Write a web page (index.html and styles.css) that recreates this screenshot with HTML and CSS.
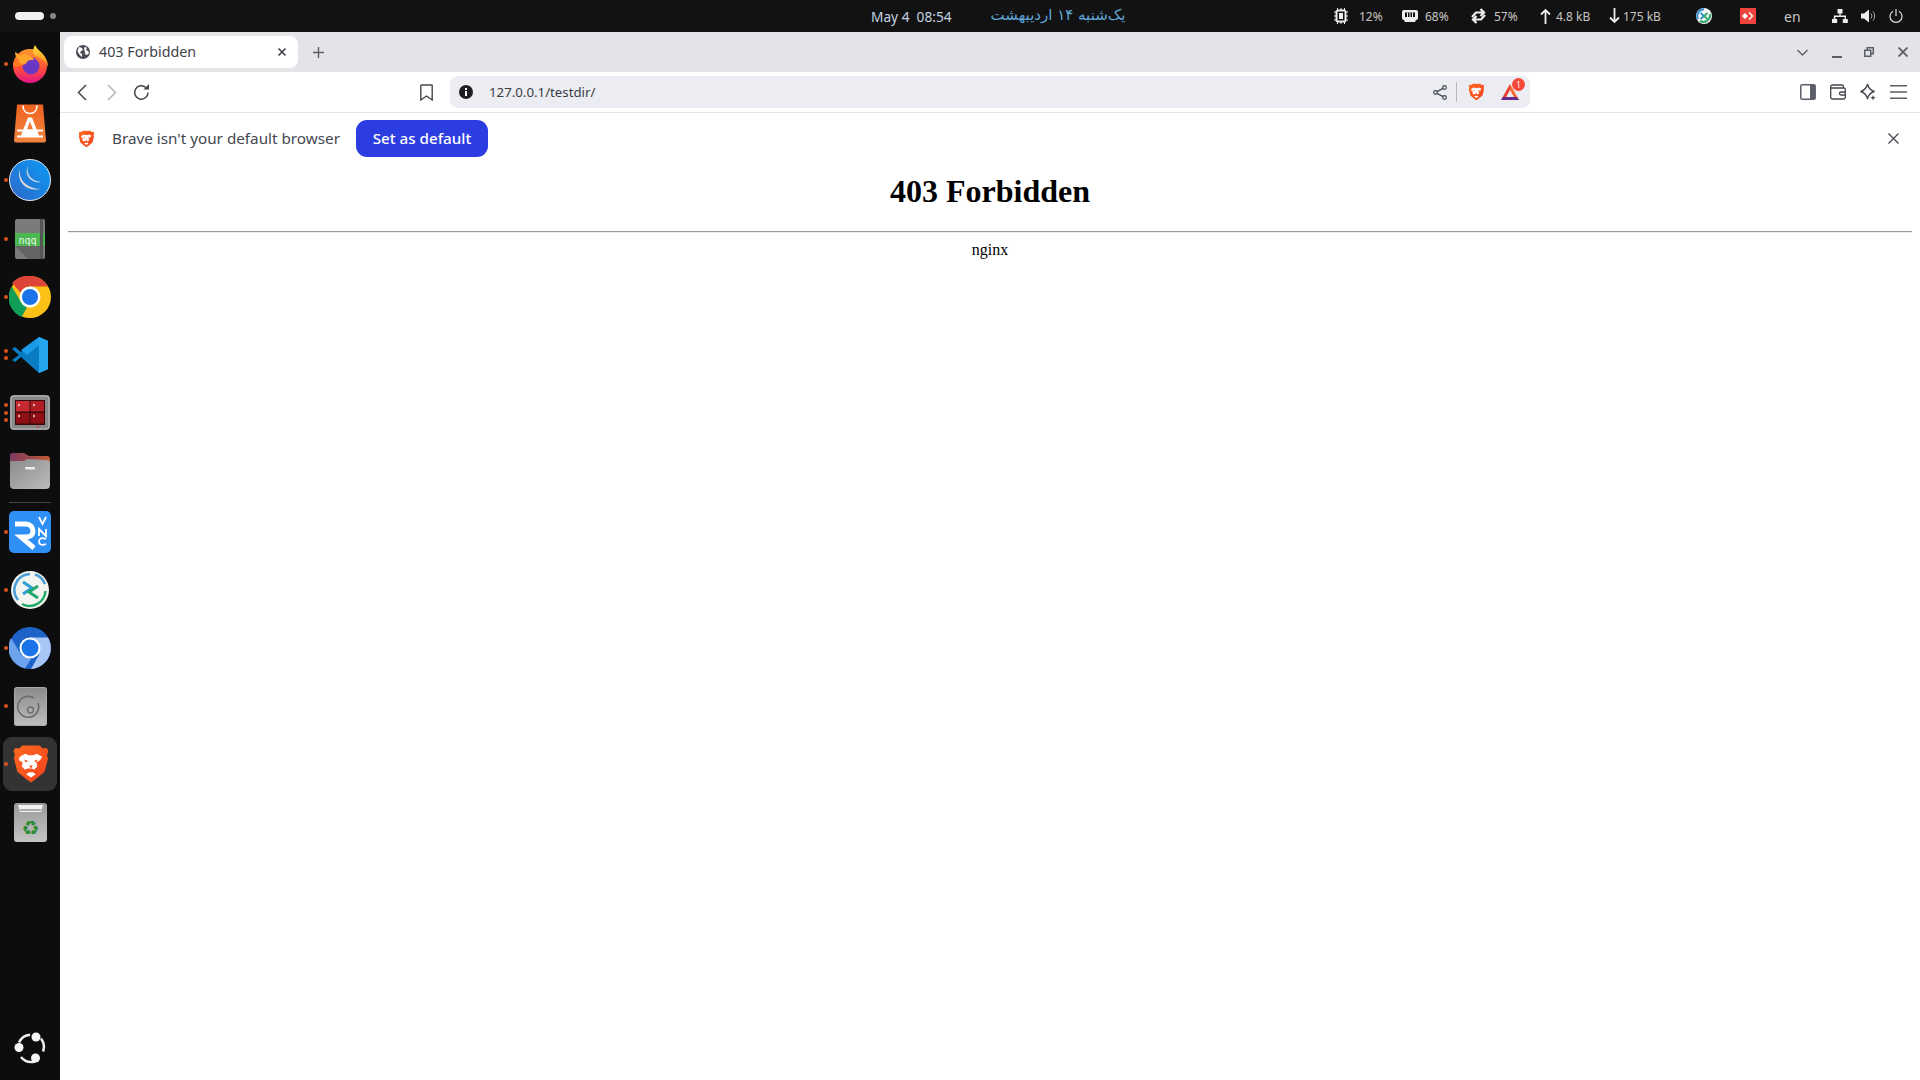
FILE: index.html
```html
<!DOCTYPE html>
<html lang="en">
<head>
<meta charset="utf-8">
<title>403 Forbidden</title>
<link rel="stylesheet" href="styles.css">
</head>
<body>
<svg class="defs" width="0" height="0" aria-hidden="true">
  <defs>
    <linearGradient id="gBrave" x1="0" y1="0" x2="1" y2="1"><stop offset="0" stop-color="#ff6a1f"/><stop offset="1" stop-color="#f0401f"/></linearGradient>
    <symbol id="brave" viewBox="0 0 36 40">
      <path fill="url(#gBrave)" d="M9 1h18l3 3 4-.5 2 3-1.500 4.500 1 3.500L32 28l-9 7.500-5 3.500-5-3.500L4 28 .5 14l1-3.500L0 6.500l2-3 4 .5z"/>
      <path fill="#fff" d="M18 34l-5-3.500 3-2h4l3 2zM6.500 12.500l5.500-3 3.500 1.500h5l3.500-1.500 5.500 3-2 3.500-4 2.500 1 4-3.500 3.500-2-1.500h-5l-2 1.500-3.500-3.500 1-4-4-2.500z"/>
      <path fill="#f0501f" d="M11 15.500l4 1.500-2.500 1.500zM25 15.500l-4 1.500 2.500 1.500zM16 21.500h4l-2 3z"/>
    </symbol>
  </defs>
</svg>

<header class="topbar">
  <div class="workspaces"><span class="ws-pill"></span><span class="ws-dot"></span></div>
  <div class="clock"><span>May 4&nbsp; 08:54</span><span class="persian" dir="rtl" lang="fa">یک‌شنبه ۱۴ اردیبهشت</span></div>
  <div class="status">
    <span class="stat s-cpu"><svg width="14" height="16" viewBox="0 0 14 16"><path fill="none" stroke="#eee" d="M3.500 0v16M7 0v16M10.500 0v16M0 4h14M0 8h14M0 12h14"/><rect x="1.500" y="1.500" width="11" height="13" rx="2.500" fill="#eee"/><rect x="3.500" y="3.500" width="7" height="9" fill="#121212"/><rect x="5" y="5" width="4" height="6" fill="#eee"/></svg>12%</span>
    <span class="stat s-mem"><svg width="16" height="14" viewBox="0 0 16 14"><path fill="#eee" d="M2 1h12a2 2 0 0 1 2 2v6a2 2 0 0 1-2 2l-1 2H3l-1-2a2 2 0 0 1-2-2V3a2 2 0 0 1 2-2z"/><path fill="#121212" d="M3 3.500h10V8H3z"/><path fill="#eee" d="M5 3.500h1V8H5zM7.500 3.500h1V8h-1zM10 3.500h1V8h-1z"/></svg>68%</span>
    <span class="stat s-swap"><svg width="15" height="16" viewBox="0 0 15 16"><path fill="none" stroke="#eee" stroke-width="2.200" d="M1 9l4-4.500h8M9.500 1l3.500 3.500L9.500 8M14 7l-4 4.500H2M5.500 15L2 11.500 5.500 8"/></svg>57%</span>
    <span class="stat s-up"><svg width="11" height="16" viewBox="0 0 11 16"><path fill="none" stroke="#eee" stroke-width="1.800" d="M5.500 16V2M1 6.500l4.500-4.500L10 6.500"/></svg>4.8 kB</span>
    <span class="stat s-down"><svg width="11" height="16" viewBox="0 0 11 16"><path fill="none" stroke="#eee" stroke-width="1.800" d="M5.500 0v14M1 9.500L5.500 14 10 9.500"/></svg>175 kB</span>
    <span class="tray t-rust"><svg width="16" height="16" viewBox="0 0 16 16"><circle cx="8" cy="8" r="8" fill="#f2f4f2"/><path fill="none" stroke="#2f8fd6" stroke-width="2" d="M8 1.200A6.800 6.800 0 0 0 2 11"/><path fill="none" stroke="#2fa96f" stroke-width="2" d="M14 6a6.800 6.800 0 0 1-10 7"/><path fill="none" stroke="#2f8fd6" stroke-width="1.800" d="M4.500 5L8 8 4.500 11"/><path fill="none" stroke="#2fa96f" stroke-width="1.800" d="M11.500 5L8 8l3.500 3"/></svg></span>
    <span class="tray t-any"><svg width="16" height="16" viewBox="0 0 16 16"><rect width="16" height="16" fill="#ef443b"/><path fill="#fff" d="M5 5l3 3-3 3-3-3zM9.500 4l4 4-4 4-1-1 3-3-3-3z"/></svg></span>
    <span class="lang">en</span>
    <span class="tray t-net"><svg width="16" height="16" viewBox="0 0 16 16"><path fill="#eee" d="M5.500 1h5v4.500H8.600V7.500H14V11h1.800v4h-5v-4h1.800V9H3.400v2h1.800v4H0v-4h1.800V7.500h5.600V5.500H5.500z"/></svg></span>
    <span class="tray t-vol"><svg width="15" height="16" viewBox="0 0 15 16"><path fill="#eee" d="M0 5.500h3L8 1.500v13L3 10.500H0z"/><path fill="none" stroke="#aaa" d="M10 5.500a4 4 0 0 1 0 5M12 3.500a7 7 0 0 1 0 9"/></svg></span>
    <span class="tray t-pow"><svg width="14" height="16" viewBox="0 0 14 16"><path fill="none" stroke="#ddd" stroke-width="1.200" d="M7 1v7M4 3.200a6 6 0 1 0 6 0"/></svg></span>
  </div>
</header>

<div class="desk">
  <nav class="dock">
    <div class="dock-item"><i class="dot d1"></i>
      <svg width="36" height="38" viewBox="0 0 36 38"><defs><linearGradient id="ff" x1="0" y1="0" x2="0" y2="1"><stop offset="0" stop-color="#ff9a2a"/><stop offset=".6" stop-color="#ff4a3c"/><stop offset="1" stop-color="#e0158a"/></linearGradient><linearGradient id="ff2" x1="0" y1="0" x2="0" y2="1"><stop offset="0" stop-color="#ffdb3a"/><stop offset="1" stop-color="#ff8a20"/></linearGradient></defs><circle cx="18" cy="21" r="17" fill="url(#ff)"/><path fill="url(#ff2)" d="M23 0c1 3 4 5 7 8 4 4 6 9 6 14-2-5-5-8-10-10-3-1-5-3-5-6 0-2 1-4 2-6z"/><circle cx="19" cy="21" r="8.500" fill="#6a36c4"/><path fill="#ffa52c" d="M3 7c3 1 4 3 5 4 3-2 6-2 8-1 3 1 5 3 6 5-4 0-6 0-7 2-1 3-6 3-10 2 2-2 2-3 1-5-2-2-3-4-3-7z"/><path fill="#ff7a20" d="M1 21c0-3 1-5 2-7 3 3 6 5 10 5-3 2-8 3-12 2z"/></svg>
    </div>
    <div class="dock-item">
      <svg width="42" height="42" viewBox="0 -1.500 42 42"><defs><linearGradient id="as" x1="0" y1="0" x2="0" y2="1"><stop offset="0" stop-color="#f0621f"/><stop offset="1" stop-color="#f08540"/></linearGradient></defs><path fill="url(#as)" d="M8 2h26l3 36a2 2 0 0 1-2 2H7a2 2 0 0 1-2-2z"/><path fill="none" stroke="#fff" stroke-width="1.600" d="M14 3c0 5 3 8 7 8s7-3 7-8"/><path fill="#fff" d="M19 15h4l7 18h4v2H8v-2h4zM21 19l-3 8h6z"/><path fill="#fff" d="M8 27h26v2H8z"/></svg>
    </div>
    <div class="dock-item"><i class="dot d1"></i>
      <svg width="42" height="42" viewBox="0 0 42 42"><defs><linearGradient id="mt" x1="1" y1="0" x2="0" y2="1"><stop offset="0" stop-color="#0a9bf5"/><stop offset="1" stop-color="#2f67c8"/></linearGradient></defs><circle cx="21" cy="21" r="20.500" fill="url(#mt)" stroke="#dfe8f2" stroke-width="1"/><path fill="#d5d8dc" d="M11 9c-2 10 5 20 20 21-10 3-25-5-20-21zM19 7c-2 8 3 15 13 16-8 2-18-6-13-16z"/></svg>
    </div>
    <div class="dock-item"><i class="dot d1"></i>
      <svg width="30" height="40" viewBox="0 0 30 40"><rect width="30" height="40" rx="2" fill="#7b7b7b"/><path fill="#555" d="M0 27l13 13h13V27z" opacity=".6"/><rect y="14" width="30" height="13" fill="#4cb752"/><rect x="25" width="3" height="40" fill="#555"/><text x="12.500" y="24.500" class="nqq">nqq</text></svg>
    </div>
    <div class="dock-item"><i class="dot d1"></i>
      <svg width="42" height="42" viewBox="0 0 42 42"><circle cx="21" cy="21" r="21" fill="#fbc116"/><path fill="#db4437" d="M21 0a21 21 0 0 1 18.200 10.500H21a10.500 10.500 0 0 0-9.500 6L3 7A21 21 0 0 1 21 0z"/><path fill="#0f9d58" d="M2.800 10.500L12 26a10.500 10.500 0 0 0 6 5.500L12.500 41A21 21 0 0 1 2.800 10.500z" /><circle cx="21" cy="21" r="10.500" fill="#fff"/><circle cx="21" cy="21" r="8" fill="#1a73e8"/></svg>
    </div>
    <div class="dock-item"><i class="dot d2a"></i><i class="dot d2b"></i>
      <svg width="38" height="38" viewBox="0 0 38 38"><path fill="#0a7cc4" d="M28 1l9 4v28l-9 4L10 21l-6 5-3-2 7-5-7-6 3-2 6 5z"/><path fill="#1b9ce8" d="M28 1l9 4v28l-9 4V9L16 19l-6-5z"/><path fill="#25a7f0" d="M28 1l9 4v28l-9 4z"/></svg>
    </div>
    <div class="dock-item"><i class="dot d3a"></i><i class="dot d3b"></i><i class="dot d3c"></i>
      <svg width="40" height="36" viewBox="0 0 40 36"><rect width="40" height="35" rx="4" fill="#888"/><rect x="1" y="1" width="38" height="33" rx="3" fill="none" stroke="#bbb"/><rect x="5" y="5" width="30" height="25" fill="#3a0a0a"/><rect x="6" y="6" width="13.500" height="10.500" fill="#c62a30"/><rect x="20.500" y="6" width="13.500" height="10.500" fill="#b01c22"/><rect x="6" y="18" width="13.500" height="10.500" fill="#8e1015"/><rect x="20.500" y="18" width="13.500" height="10.500" fill="#8e1015"/><path stroke="#fff" stroke-width=".8" fill="none" d="M8 9l2 1-2 1M23 9l2 1-2 1M8 20l2 1-2 1M23 20l2 1-2 1"/><rect x="27" y="31" width="1.500" height="1.500" fill="#e22"/></svg>
    </div>
    <div class="dock-item">
      <svg width="40" height="36" viewBox="0 0 40 36"><defs><linearGradient id="fb" x1="0" y1="0" x2="1" y2="1"><stop offset="0" stop-color="#8a8a8a"/><stop offset="1" stop-color="#bdbdbd"/></linearGradient><linearGradient id="ft" x1="0" y1="0" x2="1" y2="0"><stop offset="0" stop-color="#7d3a62"/><stop offset="1" stop-color="#c05a30"/></linearGradient></defs><path fill="url(#ft)" d="M3 0h11l5 3h18a3 3 0 0 1 3 3v8H0V3a3 3 0 0 1 3-3z"/><path fill="url(#fb)" d="M0 8h14l3-2 20 1a3 3 0 0 1 3 3v22a4 4 0 0 1-4 4H4a4 4 0 0 1-4-4z"/><rect x="15" y="14" width="10" height="2.500" rx="1" fill="#eee"/></svg>
    </div>
    <div class="dock-sep"></div>
    <div class="dock-item"><i class="dot d1"></i>
      <svg width="42" height="42" viewBox="0 0 42 42"><rect width="42" height="42" rx="5" fill="#2e90f5"/><path fill="none" stroke="#fff" stroke-width="5" d="M6 13h11a7 7 0 0 1 7 7c0 4-3 6-7 6h-5l13 11"/><path fill="none" stroke="#fff" stroke-width="1.800" d="M30 6l3.500 7L37 6M30 25v-7l7 7v-7M37 28c-5-2-7 0-7 2.500S32 35 37 33"/></svg>
    </div>
    <div class="dock-item"><i class="dot d1"></i>
      <svg width="38" height="38" viewBox="0 0 38 38"><circle cx="19" cy="19" r="19" fill="#f3f4f0"/><path fill="none" stroke="#4a9fd8" stroke-width="2.500" d="M19 3A16 16 0 0 0 7 29M24 3.500A16 16 0 0 1 34 13"/><path fill="none" stroke="#23a86b" stroke-width="2.500" d="M34.500 20A16 16 0 0 1 11 33"/><path fill="none" stroke="#2f9fd8" stroke-width="3" d="M12 11l9 6-9 6"/><path fill="none" stroke="#23a86b" stroke-width="3" d="M27 15l-9 6 9 6"/></svg>
    </div>
    <div class="dock-item"><i class="dot d1"></i>
      <svg width="42" height="42" viewBox="0 0 42 42"><circle cx="21" cy="21" r="21" fill="#1e62c8"/><path fill="#6ea3ee" d="M2 11l11 18 9 3-6 9.500A21 21 0 0 1 2 11z"/><path fill="#a8c7f4" d="M21 10.500h18A21 21 0 0 1 22 42l8-14z"/><circle cx="21" cy="21" r="10.500" fill="#fff"/><circle cx="21" cy="21" r="8.500" fill="#1a73e8"/></svg>
    </div>
    <div class="dock-item"><i class="dot d1"></i>
      <svg width="33" height="39" viewBox="0 0 33 39"><defs><linearGradient id="dk" x1="0" y1="0" x2="0" y2="1"><stop offset="0" stop-color="#8a8a8a"/><stop offset="1" stop-color="#bfbfbf"/></linearGradient></defs><rect width="33" height="39" rx="3" fill="url(#dk)"/><rect x=".5" y=".5" width="32" height="38" rx="3" fill="none" stroke="#aaa"/><path fill="none" stroke="#6c6c6c" stroke-width="1.600" d="M24 16a10.500 10.500 0 1 1-4-5"/><circle cx="16.500" cy="23" r="3" fill="none" stroke="#6c6c6c" stroke-width="1.400"/></svg>
    </div>
    <div class="dock-item active"><i class="dot d1"></i>
      <svg width="36" height="40" viewBox="-1 0 37 40"><use href="#brave"/></svg>
    </div>
    <div class="dock-item">
      <svg width="33" height="39" viewBox="0 0 33 39"><defs><linearGradient id="tr" x1="0" y1="0" x2="0" y2="1"><stop offset="0" stop-color="#999"/><stop offset="1" stop-color="#c4c4c4"/></linearGradient></defs><rect width="33" height="39" rx="3" fill="url(#tr)"/><path fill="#f2f2f2" d="M4 2h25l-2 7H6z"/><path fill="#aaa" d="M6 6h21v2H6z"/><text x="16.500" y="32" class="recycle">♻</text></svg>
    </div>
    <div class="dock-item dock-end">
      <svg width="32" height="32" viewBox="0 0 32 32"><path fill="none" stroke="#eee" stroke-width="2.500" d="M5 10.500A13.500 13.500 0 0 1 16 2.700M27 6.500a13.500 13.500 0 0 1 2 13M7 25a13.500 13.500 0 0 0 14 4.500"/><circle cx="5" cy="15.500" r="4.500" fill="#f5f5f5"/><circle cx="22" cy="5" r="4.500" fill="#f5f5f5"/><circle cx="21.500" cy="26" r="4.500" fill="#f5f5f5"/></svg>
    </div>
  </nav>

  <main class="browser">
    <div class="tabstrip">
      <div class="tab">
        <svg class="globe" width="14" height="14" viewBox="0 0 14 14"><circle cx="7" cy="7" r="7" fill="#4a4d55"/><path fill="#fff" d="M3 2l3 1 1 2-2 1-1 2 2 1v3L3 9 1.500 6zM9 1.500l2 1.500-1 2 2 1 1 2-2 2-2-1V7L8 4z"/></svg>
        <span class="tab-title">403 Forbidden</span>
        <svg class="tab-x" width="8" height="8" viewBox="0 0 8 8"><path stroke="#3a3d45" stroke-width="1.500" d="M.5.5l7 7M7.500.5l-7 7"/></svg>
      </div>
      <svg class="plus" width="11" height="11" viewBox="0 0 11 11"><path stroke="#5c5f68" stroke-width="1.400" d="M5.500 0v11M0 5.500h11"/></svg>
      <div class="win-ctrl">
        <svg width="11" height="7" viewBox="0 0 11 7"><path fill="none" stroke="#5c5f68" stroke-width="1.400" d="M.5 1l5 5 5-5"/></svg>
        <svg class="wc-min" width="10" height="2" viewBox="0 0 10 2"><path fill="#5c5f68" d="M0 0h10v2H0z"/></svg>
        <svg class="wc-max" width="10" height="10" viewBox="0 0 10 10"><path fill="#5c5f68" d="M2.500 0H10v7.500H7.500V10H0V2.500h2.500z"/><path fill="#e3e3e8" d="M4 1.500h4.500V6H7.500V2.500H4zM1.500 4H6v4.500H1.500z"/></svg>
        <svg class="wc-close" width="10" height="10" viewBox="0 0 10 10"><path stroke="#5c5f68" stroke-width="1.800" d="M.5.500l9 9M9.500.500l-9 9"/></svg>
      </div>
    </div>

    <div class="toolbar">
      <svg class="tb-back" width="10" height="17" viewBox="0 0 10 17"><path fill="none" stroke="#44474f" stroke-width="1.500" d="M9 1L1.500 8.500 9 16"/></svg>
      <svg class="tb-fwd" width="10" height="17" viewBox="0 0 10 17"><path fill="none" stroke="#b4b6bc" stroke-width="1.500" d="M1 1l7.500 7.500L1 16"/></svg>
      <svg class="tb-reload" width="17" height="17" viewBox="0 0 17 17"><path fill="none" stroke="#44474f" stroke-width="1.500" d="M15 8.500A6.700 6.700 0 1 1 12.800 3.500"/><path fill="#44474f" d="M10.500 5.500H16V0z"/></svg>
      <svg class="tb-mark" width="13" height="17" viewBox="0 0 13 17"><path fill="none" stroke="#44474f" stroke-width="1.400" d="M1.500 1h10a.7.7 0 0 1 .7.700V16l-5.700-4-5.700 4V1.700a.7.7 0 0 1 .7-.7z"/></svg>
      <div class="urlbar">
        <svg class="url-info" width="14" height="14" viewBox="0 0 14 14"><circle cx="7" cy="7" r="7" fill="#1d1f25"/><path fill="#fff" d="M6 6h2v5H6zM6 3h2v2H6z"/></svg>
        <span class="url-text">127.0.0.1/testdir/</span>
        <svg class="url-share" width="14" height="15" viewBox="0 0 14 15"><g fill="none" stroke="#44474f" stroke-width="1.200"><circle cx="2.500" cy="7.500" r="1.800"/><circle cx="11.500" cy="2.500" r="1.800"/><circle cx="11.500" cy="12.500" r="1.800"/><path d="M4 6.600l6-3.200M4 8.400l6 3.200"/></g></svg>
        <span class="url-div"></span>
        <svg class="url-brave" width="16" height="18" viewBox="-1 0 37 40"><use href="#brave"/></svg>
        <span class="url-bat">
          <svg width="18" height="16" viewBox="0 0 18 16"><path fill="#e8402f" d="M9 0L0 16h3.500L9 6z"/><path fill="#f26a2a" d="M9 0l9 16h-3.500L9 6z"/><path fill="#662d91" d="M0 16h18l-2-3H2z"/></svg>
          <span class="badge">1</span>
        </span>
      </div>
      <div class="tb-right">
        <svg width="16" height="16" viewBox="0 0 16 16"><rect x=".8" y=".8" width="14.400" height="14.400" rx="1.500" fill="none" stroke="#5c5f68" stroke-width="1.500"/><rect x="10" y="1" width="5" height="14" fill="#5c5f68"/></svg>
        <svg width="16" height="16" viewBox="0 0 16 16"><g fill="none" stroke="#44474f" stroke-width="1.300"><path d="M13.500 4V2.500A1.500 1.500 0 0 0 12 1H2.500A1.800 1.800 0 0 0 .7 2.800v10.400A1.800 1.800 0 0 0 2.500 15h11a1.800 1.800 0 0 0 1.800-1.800V5.500A1.500 1.500 0 0 0 13.800 4H1"/><path d="M15 8h-4a1.500 1.500 0 0 0 0 3h4"/></g></svg>
        <svg width="16" height="18" viewBox="0 0 16 18"><path fill="none" stroke="#44474f" stroke-width="1.300" d="M7.500 1c1 4.500 3 6.500 7 7.500-4 1-6 3-7 7.500-1-4.500-3-6.500-7-7.500 4-1 6-3 7-7.500z"/><path fill="#44474f" d="M13 12l.8 2 2 .8-2 .8-.8 2-.8-2-2-.8 2-.8z"/></svg>
        <svg width="17" height="14" viewBox="0 0 17 14"><path fill="#5c5f68" d="M0 0h17v1.400H0zM0 6.300h17v1.400H0zM0 12.600h17V14H0z"/></svg>
      </div>
    </div>

    <div class="infobar">
      <svg class="ib-brave" width="16" height="18" viewBox="-1 0 37 40"><use href="#brave"/></svg>
      <span class="ib-text">Brave isn't your default browser</span>
      <button class="ib-btn" type="button">Set as default</button>
      <svg class="ib-x" width="11" height="11" viewBox="0 0 11 11"><path stroke="#44474f" stroke-width="1.300" d="M.5.500l10 10M10.500.500l-10 10"/></svg>
    </div>

    <div class="page">
      <h1>403 Forbidden</h1>
      <hr>
      <p class="srv">nginx</p>
    </div>
  </main>
</div>
</body>
</html>
```

FILE: styles.css
```css
* { box-sizing: border-box; }
html, body { margin: 0; height: 100%; overflow: hidden; }
body { display: flex; flex-direction: column; width: 1920px; height: 1080px; font-family: "Noto Sans", "DejaVu Sans", sans-serif; background: #fff; }
.defs { position: absolute; }
svg { display: block; flex: none; }

/* top bar */
.topbar { flex: none; height: 32px; background: #121212; display: flex; align-items: center; color: #c9c9c9; font-size: 12px; }
.workspaces { display: flex; align-items: center; gap: 6px; padding-left: 15px; width: 871px; }
.ws-pill { width: 29px; height: 8px; border-radius: 4px; background: #f0f0f0; }
.ws-dot { width: 6px; height: 6px; border-radius: 50%; background: #8a8a8a; }
.clock { display: flex; align-items: center; gap: 39px; width: 463px; font-size: 13.700px; color: #c4d4e2; white-space: nowrap; }
.persian { font-family: "DejaVu Sans", sans-serif; font-size: 15px; color: #5fa5d6; margin-top: -2px; }
.status { display: flex; align-items: center; }
.stat { display: flex; align-items: center; color: #c6c6c6; white-space: nowrap; }
.s-cpu { gap: 11px; width: 68px; }
.s-mem { gap: 7px; width: 69px; }
.s-swap { gap: 8px; width: 69px; }
.s-up { gap: 5px; width: 69px; }
.s-down { gap: 3px; width: 87px; }
.tray { display: flex; }
.t-rust { width: 44px; }
.t-any { width: 44px; }
.lang { width: 48px; font-size: 14px; color: #c6c6c6; }
.t-net { width: 29px; }
.t-vol { width: 28px; }

/* desk */
.desk { flex: 1; display: flex; min-height: 0; }
.dock { flex: none; width: 60px; background: #0d0d0d; display: flex; flex-direction: column; align-items: center; padding-top: 3px; }
.dock-item { position: relative; width: 54px; height: 58.200px; flex: none; display: flex; align-items: center; justify-content: center; border-radius: 9px; }
.dock-item.active { background: #333; height: 54px; margin: 2.100px 0; }
.dock-end { margin-top: auto; margin-bottom: 3px; }
.dock-sep { flex: none; width: 42px; height: 1px; background: #444; margin: 1px 0 0; }
.dot { position: absolute; left: 1px; width: 4px; height: 4px; border-radius: 50%; background: #d9541e; }
.d1 { top: calc(50% - 2px); }
.d2a { top: calc(50% - 6px); }
.d2b { top: calc(50% + 1px); }
.d3a { top: calc(50% - 10px); }
.d3b { top: calc(50% - 2px); }
.d3c { top: calc(50% + 5px); }
.nqq { font: 10px "DejaVu Sans Mono", monospace; fill: #e8f5e8; text-anchor: middle; }
.recycle { font: 20px "DejaVu Sans", sans-serif; fill: #2e8c33; text-anchor: middle; }

/* browser */
.browser { flex: 1; min-width: 0; display: flex; flex-direction: column; }
.tabstrip { flex: none; height: 40px; background: #e3e3e8; display: flex; align-items: center; padding-left: 4px; }
.tab { width: 234px; height: 32px; background: #fff; border-radius: 8px; display: flex; align-items: center; padding-left: 12px; }
.tab-title { margin-left: 9px; margin-top: -1px; font-size: 14.300px; color: #3f4249; flex: 1; white-space: nowrap; }
.tab-x { margin-right: 12px; }
.plus { margin-left: 15px; }
.win-ctrl { margin-left: auto; display: flex; align-items: center; padding-right: 12px; }
.wc-min { margin-left: 24px; margin-top: 9px; }
.wc-max { margin-left: 22px; }
.wc-close { margin-left: 24px; }

.toolbar { flex: none; height: 41px; background: #fff; border-bottom: 1px solid #e3e3e8; display: flex; align-items: center; padding-left: 17px; }
.tb-fwd { margin-left: 20px; }
.tb-reload { margin-left: 16px; }
.tb-mark { margin-left: 270px; }
.urlbar { margin-left: 17px; width: 1080px; height: 32px; border-radius: 8px; background: #ecedf2; display: flex; align-items: center; padding-left: 9px; }
.url-text { margin-left: 16px; font-size: 13.250px; color: #3a3d45; flex: 1; white-space: nowrap; }
.url-div { width: 1px; height: 20px; background: #b8bac0; margin-left: 9px; }
.url-brave { margin-left: 11px; }
.url-bat { position: relative; margin-left: 17px; margin-right: 11px; }
.badge { position: absolute; top: -6px; left: 11px; width: 13px; height: 13px; border-radius: 50%; background: #f5483b; color: #fff; font-size: 8px; line-height: 13px; text-align: center; }
.tb-right { display: flex; align-items: center; gap: 14px; margin-left: 270px; }

.infobar { flex: none; height: 52px; display: flex; align-items: center; padding-left: 18px; padding-right: 21px; padding-bottom: 1px; background: #fff; }
.ib-text { margin-left: 18px; margin-top: -1px; font-size: 15.250px; color: #44474f; white-space: nowrap; }
.ib-btn { margin-left: 16px; width: 132px; height: 37px; border: 0; border-radius: 11px; background: #2b3ce0; color: #fff; font: 500 15.200px "Noto Sans", sans-serif; padding: 0 0 2px; }
.ib-x { margin-left: auto; }

.page { flex: 1; padding: 0 8px; font-family: "Liberation Serif", serif; color: #000; font-size: 16px; }
.page h1 { margin: 8px 0 21.440px; font-size: 32px; line-height: 37px; text-align: center; font-weight: 700; }
.page hr { margin: 0; height: 2px; border: 0; border-top: 1px solid #9a9a9a; border-bottom: 1px solid #eee; }
.srv { margin: 8px 0 0; line-height: 18px; text-align: center; }
```
